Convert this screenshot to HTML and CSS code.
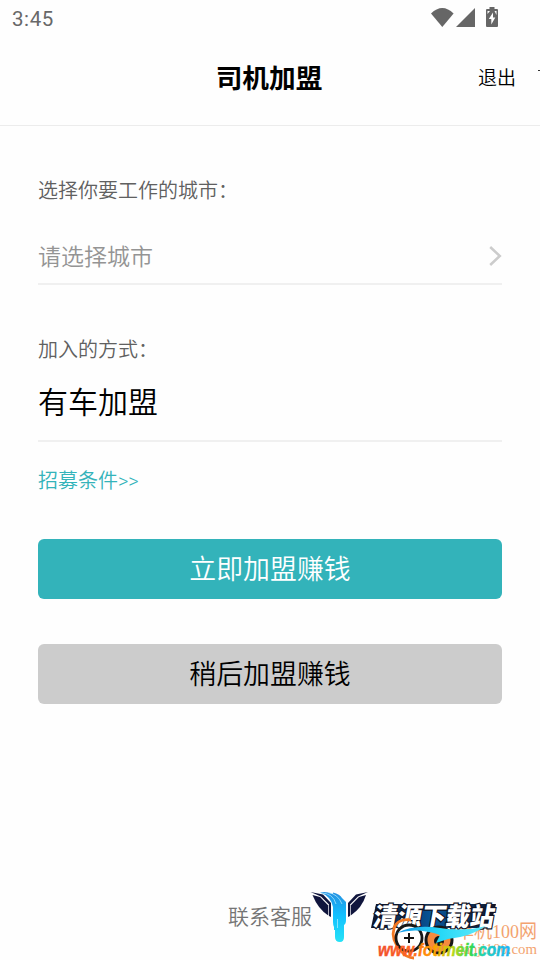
FILE: index.html
```html
<!DOCTYPE html>
<html lang="zh-CN">
<head>
<meta charset="utf-8">
<title>司机加盟</title>
<link rel="stylesheet" href="styles.css">
</head>
<body>
<div class="screen">
  <div class="status">
    <span class="clock">3:45</span>
    <svg class="status-icons" width="70" height="22" viewBox="430 6 70 22" fill="#666">
      <path d="M431 13.500Q442.300 2.500 453.600 13.500L442.300 27Z"/>
      <path d="M456 27H475V8Z"/>
      <path fill-rule="evenodd" d="M489.500 7H494.500V9H497Q498 9 498 10V26Q498 27 497 27H487Q486 27 486 26V10Q486 9 487 9H489.500ZM493 12.500L488.800 19H491.300V24.500L495.300 17.500H493ZM487.500 11V14L490 11ZM494.500 11L496.500 15V11Z"/>
    </svg>
  </div>
  <header class="header">
    <h1>司机加盟</h1>
    <span class="exit">退出</span>
    <i class="more"></i>
  </header>
  <main class="form">
    <div class="label">选择你要工作的城市：</div>
    <div class="field city">
      <span>请选择城市</span>
      <svg width="13" height="20" viewBox="0 0 13 20"><path d="M1.200 1L10.800 10L1.200 19" fill="none" stroke="#ccc" stroke-width="2.500"/></svg>
    </div>
    <div class="label way">加入的方式：</div>
    <div class="field mode">有车加盟</div>
    <a class="terms">招募条件&gt;&gt;</a>
    <button class="btn primary">立即加盟赚钱</button>
    <button class="btn later">稍后加盟赚钱</button>
  </main>
  <footer class="service">联系客服</footer>
  <svg class="marks" width="240" height="80" viewBox="300 880 240 80">
    <defs>
      <linearGradient id="water" x1="0" y1="0" x2="0" y2="1"><stop offset="0" stop-color="#268fe0"/><stop offset=".45" stop-color="#12bfff"/><stop offset="1" stop-color="#25e2f6"/></linearGradient>
      <linearGradient id="rainbow" gradientUnits="userSpaceOnUse" x1="378" y1="0" x2="510" y2="0"><stop offset="0" stop-color="#f0502c"/><stop offset=".25" stop-color="#ff6220"/><stop offset=".42" stop-color="#ffa000"/><stop offset=".57" stop-color="#b5d819"/><stop offset=".7" stop-color="#35d950"/><stop offset=".82" stop-color="#20cfc0"/><stop offset="1" stop-color="#1fb1f5"/></linearGradient>
      <linearGradient id="plate" x1="0" x2="1"><stop offset="0" stop-color="#101325"/><stop offset=".5" stop-color="#07569b"/><stop offset="1" stop-color="#101325"/></linearGradient>
      <linearGradient id="fin" x1="0" x2="1"><stop offset="0" stop-color="#1696e8"/><stop offset=".5" stop-color="#28d9f7"/><stop offset="1" stop-color="#62e9fa"/></linearGradient>
    </defs>
    <g fill="#10153d">
      <path d="M310.500 892L323 894.500L331 903V917L329 916V904.500L321 896.500Z"/>
      <path d="M312.500 895L320 897L328.300 905.500V915.500Q318 909 312.500 895Z"/>
      <path d="M368 892L356 894.500L348 903V917L350 916V904.500L358 896.500Z"/>
      <path d="M366 895L359 897L350.700 905.500V915.500Q362 908 366 895Z"/>
    </g>
    <path fill="url(#water)" d="M320 892.500Q326 891 333 894V892.500Q340 894 342 898L346 902V920Q346 924 344 925V937Q344 942 340 942Q335 942 335 937V930H334V927Q333 925 333 922V907Q331 896 320 892.500Z"/>
    <path d="M321 893Q333 893 336 904M328 892.500Q338 894 342 904M337.500 928V919" stroke="#b9efff" stroke-width=".7" fill="none"/>

    <text class="danji-cn" x="456" y="938" textLength="81" lengthAdjust="spacingAndGlyphs">单机100网</text>
    <text class="danji-url" x="456" y="954" textLength="81" lengthAdjust="spacingAndGlyphs">danji100.com</text>
    <path d="M376 904H496L490 928H371Z" fill="url(#plate)"/>
    <text class="qingyuan" transform="translate(372 926) skewX(-10)" x="0" y="0" textLength="121" lengthAdjust="spacingAndGlyphs">清源下载站</text>
    <path d="M411 920C393 917 387 935 401 951C404 955 409 958 414 958" fill="none" stroke="#f37822" stroke-width="2.800"/>
    <circle cx="409" cy="938" r="13" fill="#fff" stroke="#171717" stroke-width="2.800"/>
    <path d="M409 933V943M404 938H414" stroke="#111" stroke-width="2"/>
    <circle cx="439" cy="940" r="13" fill="#f58a3e" stroke="#171717" stroke-width="3"/>
    <circle cx="439" cy="941" r="5" fill="#151515"/>
    <path d="M397 933Q414 924 440 928Q464 932 486 926Q470 937 448 939L436 943L440 935Q418 927 397 933Z" fill="url(#fin)"/>
    <text class="fotime" x="378" y="956" textLength="132" lengthAdjust="spacingAndGlyphs">www.fotimeit.com</text>
  </svg>
</div>
</body>
</html>
```
FILE: styles.css
```css
* { box-sizing: border-box; }
body { margin: 0; background: #fff; color: #000; font-family: Roboto, "Noto Sans CJK SC", sans-serif; font-weight: 350; }
.screen { position: relative; width: 540px; height: 960px; overflow: hidden; display: flex; flex-direction: column; background: #fefefe; }
.status { height: 36px; flex: none; display: flex; justify-content: space-between; padding: 0 40px 0 12px; }
.clock { font-size: 20.5px; line-height: 38px; letter-spacing: .6px; color: #686868; font-weight: 450; }
.status-icons { margin-top: 6px; }
.header { position: relative; height: 90px; flex: none; display: grid; grid-template-columns: 1fr auto 1fr; align-items: start; border-bottom: 1px solid #ececec; }
.header h1 { grid-column: 2; margin: 23px 2px 0 0; font-size: 26.7px; line-height: 40px; font-weight: 700; }
.exit { justify-self: end; margin: 28px 24px 0 0; font-size: 19px; line-height: 30px; }
.more { position: absolute; right: 0; top: 34px; width: 2px; height: 1px; background: #333; }
.form { display: flex; flex-direction: column; padding: 50px 38px 0; }
.label { font-size: 20px; line-height: 30px; color: #606060; }
.field { display: flex; align-items: center; justify-content: space-between; border-bottom: 2px solid #f0f0f0; }
.city { height: 57px; margin-top: 22px; font-size: 23px; line-height: 34px; color: #949494; }
.city span { padding-top: 5px; }
.way { margin-top: 50px; }
.mode { height: 77px; font-size: 30px; line-height: 44px; }
.terms { margin-top: 24px; font-size: 20px; line-height: 30px; color: #33b3ba; }
.btn { height: 60px; padding: 2px 0 0; border: 0; border-radius: 6px; font-family: inherit; font-weight: inherit; font-size: 26.9px; line-height: 58px; }
.primary { margin-top: 43px; color: #fff; background: #33b3ba; }
.later { margin-top: 45px; color: #000; background: #ccc; }
.service { margin: auto 0 28px; text-align: center; font-size: 21px; line-height: 30px; color: #747474; }
.marks { position: absolute; right: 0; bottom: 0; }
.qingyuan { font: 900 26px "Noto Sans CJK SC", sans-serif; fill: #fff; stroke: #101325; stroke-width: 2.4px; paint-order: stroke; }
.danji-cn { font: 19.5px "Liberation Serif", "Noto Sans CJK SC", serif; fill: #f3a36f; }
.danji-url { font: 15px "Liberation Serif", serif; fill: #f3a36f; }
.fotime { font: italic bold 17.5px "Liberation Sans", sans-serif; fill: url(#rainbow); stroke: url(#rainbow); stroke-width: .4px; }
```
